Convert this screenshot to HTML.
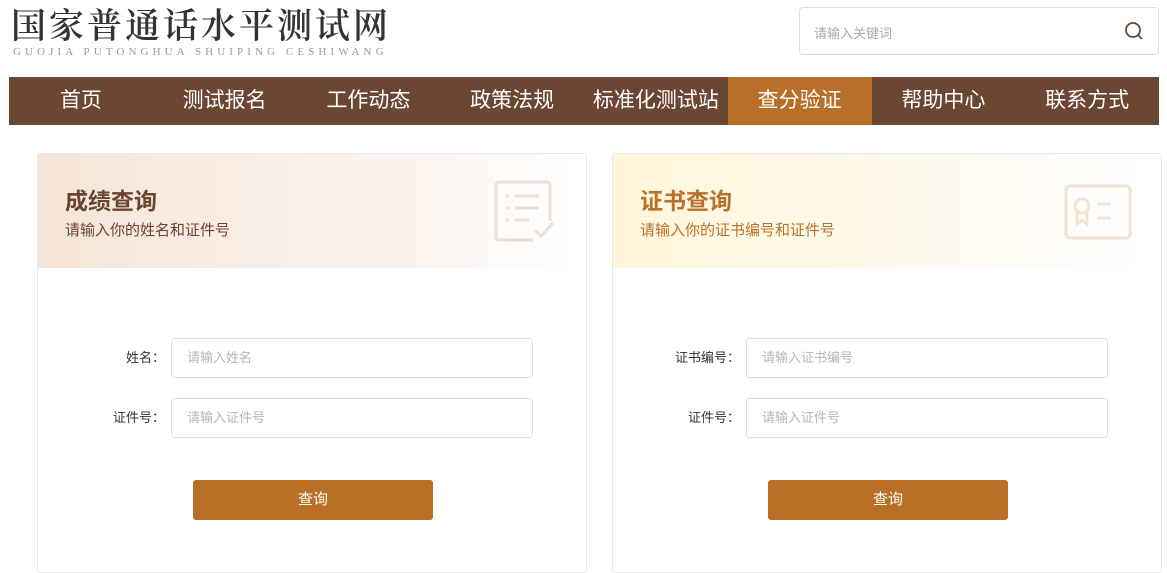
<!DOCTYPE html>
<html><head><meta charset="utf-8"><style>
*{margin:0;padding:0;box-sizing:border-box}
body{width:1167px;height:544px;overflow:hidden;background:#fff;font-family:"Liberation Sans","Noto Sans CJK SC",sans-serif;position:relative}
.logo{position:absolute;left:11px;top:4px;font-family:"Noto Serif CJK SC",serif;font-size:35px;font-weight:600;color:#333;letter-spacing:3px;line-height:40px}
.sub{position:absolute;left:13px;top:46px;font-family:"Liberation Serif",serif;font-size:11px;color:#999;letter-spacing:4.1px}
.search{position:absolute;left:799px;top:7px;width:360px;height:48px;border:1px solid #ddd;border-radius:4px}
.search span{position:absolute;left:14px;top:15px;font-size:13px;color:#aaa}
.search svg{position:absolute;right:14px;top:13px}
.nav{position:absolute;left:9px;top:77px;width:1150px;height:48px;background:#6b4633;display:flex}
.nav div{width:143.75px;text-align:center;color:#fff;font-size:21px;line-height:48px}
.nav .on{background:#b86f2a}
.card{position:absolute;top:153px;width:550px;height:420px;border:1px solid #e8e8e8;border-radius:3px}
.hd{height:114px;position:relative}
.hd h2{position:absolute;left:27px;top:28px;font-size:23px;font-weight:bold}
.hd p{position:absolute;left:27px;top:65px;font-size:15px}
.hd svg{position:absolute}
.row{position:absolute;height:40px}
.row label{position:absolute;right:100%;margin-right:6px;top:0;line-height:40px;font-size:13px;color:#333;white-space:nowrap}
.row div{width:362px;height:40px;border:1px solid #ddd;border-radius:3px;padding-left:15px;line-height:38px;font-size:13px;color:#b5b5b5}
.btn{position:absolute;width:240px;height:40px;background:#b86f26;border-radius:3px;color:#fff;font-size:15px;text-align:center;line-height:40px}
</style></head><body>
<div class="logo">国家普通话水平测试网</div>
<div class="sub">GUOJIA PUTONGHUA SHUIPING CESHIWANG</div>
<div class="search"><span>请输入关键词</span><svg width="20" height="20" viewBox="0 0 20 20"><circle cx="9" cy="9" r="7" fill="none" stroke="#6b4633" stroke-width="1.8"/><path d="M14 14l4 4" stroke="#6b4633" stroke-width="1.8"/></svg></div>
<div class="nav"><div>首页</div><div>测试报名</div><div>工作动态</div><div>政策法规</div><div>标准化测试站</div><div class="on">查分验证</div><div>帮助中心</div><div>联系方式</div></div>

<div class="card" style="left:37px">
<div class="hd" style="background:linear-gradient(90deg,#f5e5d8,#fbf4ef 70%,#fff 97%)">
<h2 style="color:#6b4530">成绩查询</h2><p style="color:#6b4530">请输入你的姓名和证件号</p>
<svg style="left:455px;top:26px" width="64" height="64" viewBox="0 0 64 64" fill="none" stroke="#ecdfd6" stroke-width="3"><path d="M40 60H6a3 3 0 0 1-3-3V5a3 3 0 0 1 3-3h48a3 3 0 0 1 3 3v36"/><path d="M13 16h3M22 16h24M13 28h3M22 28h24M13 40h3M22 40h14M42 50l6 6 12-13"/></svg>
</div>
<div class="row" style="left:133px;top:184px"><label>姓名：</label><div>请输入姓名</div></div>
<div class="row" style="left:133px;top:244px"><label>证件号：</label><div>请输入证件号</div></div>
<div class="btn" style="left:155px;top:326px">查询</div>
</div>

<div class="card" style="left:612px">
<div class="hd" style="background:linear-gradient(90deg,#fff6da,#fffaf0 60%,#fff 97%)">
<h2 style="color:#b8702a">证书查询</h2><p style="color:#b8702a">请输入你的证书编号和证件号</p>
<svg style="left:451px;top:30px" width="68" height="56" viewBox="0 0 68 56" fill="none" stroke="#f3e3d3" stroke-width="3"><rect x="2" y="2" width="64" height="52" rx="4"/><circle cx="18" cy="22" r="7"/><path d="M13 28v12l5-4 5 4V28M33 20h14M33 34h14"/></svg>
</div>
<div class="row" style="left:133px;top:184px"><label>证书编号：</label><div>请输入证书编号</div></div>
<div class="row" style="left:133px;top:244px"><label>证件号：</label><div>请输入证件号</div></div>
<div class="btn" style="left:155px;top:326px">查询</div>
</div>
</body></html>
